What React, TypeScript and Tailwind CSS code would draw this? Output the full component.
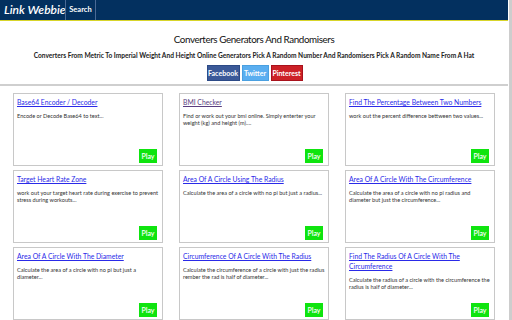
import React from "react";

const cards = [
  { t: "Base64 Encoder / Decoder", d: "Encode or Decode Base64 to text...", v: false },
  { t: "BMI Checker", d: "Find or work out your bmi online. Simply enterter your weight (kg) and height (m)....", v: true },
  { t: "Find The Percentage Between Two Numbers", d: "work out the percent difference bettween two values...", v: false },
  { t: "Target Heart Rate Zone", d: "work out your target heart rate during exercise to prevent stress during workouts...", v: false },
  { t: "Area Of A Circle Using The Radius", d: "Calculate the area of a circle with no pi but just a radius...", v: false },
  { t: "Area Of A Circle With The Circumference", d: "Calculate the area of a circle with no pi radius and diameter but just the circumference...", v: false },
  { t: "Area Of A Circle With The Diameter", d: "Calculate the area of a circle with no pi but just a diameter...", v: false },
  { t: "Circumference Of A Circle With The Radius", d: "Calculate the circumference of a circle with just the radius rember the rad is half of diameter...", v: false },
  { t: "Find The Radius Of A Circle With The Circumference", d: "Calculate the radius of a circle with the circumference the radius is half of diameter...", v: false },
];

export default function App() {
  return (
    <div className="flex h-[320px] w-[512px] overflow-hidden bg-white" style={{ fontFamily: 'Lato, "Open Sans", sans-serif' }}>
      <div className="flex w-[508px] flex-col">
        <div className="flex h-[24px] items-stretch bg-[#03305f]">
          <div className="flex w-[65px] items-center whitespace-nowrap pl-[4px] text-[12px] italic font-semibold text-white">Link Webbie</div>
          <div className="w-px bg-[#4a6a96]" />
          <div className="flex w-[29px] items-center justify-center whitespace-nowrap text-[7.5px] font-bold text-white">Search</div>
          <div className="w-px bg-[#4a6a96]" />
        </div>
        <div className="h-[2px] bg-[#d8d52a]" />
        <div className="mt-[11px] text-center text-[9.8px] tracking-[-0.4px] leading-[14px] text-[#111]">Converters Generators And Randomisers</div>
        <div className="mt-[5px] whitespace-nowrap text-center text-[6.6px] font-bold leading-[8px] text-[#222]">Converters From Metric To Imperial Weight And Height Online Generators Pick A Random Number And Randomisers Pick A Random Name From A Hat</div>
        <div className="mt-[6px] flex justify-center gap-[2px] pl-[1px]">
          <div className="flex h-[16px] w-[33px] items-center justify-center border border-[#2c4a86] bg-[#3b5998] text-[7px] font-bold text-white">Facebook</div>
          <div className="flex h-[16px] w-[27px] items-center justify-center border border-[#4aa0e0] bg-[#5aaef0] text-[7px] font-bold text-white">Twitter</div>
          <div className="flex h-[16px] w-[32px] items-center justify-center border border-[#a8121c] bg-[#cc2127] text-[7px] font-bold text-white">Pinterest</div>
        </div>
        <div className="mt-[3px] h-[2px] bg-[#cfcfcf]" />
        <div className="mt-[7px] grid grid-cols-[150px_150px_150px] gap-x-[16px] gap-y-[4px] pl-[13px]">
          {cards.map((c) => (
            <div key={c.t} className="flex h-[73px] flex-col border border-[#c8c8c8] pl-[3px] pr-[2px] pt-[3px]">
              <div className={`text-[6.8px] leading-[10px] underline ${c.v ? "text-[#5a3d7e]" : "text-[#2a2ae8]"}`}>{c.t}</div>
              <div className="mt-[5px] text-[5.6px] leading-[7px] text-[#333]">{c.d}</div>
              <div className="mt-auto mb-[2px] mr-[3px] flex h-[14px] w-[18px] items-center justify-center self-end bg-[#0fe40f] text-[7px] font-semibold text-white">Play</div>
            </div>
          ))}
        </div>
      </div>
      <div className="w-[4px] border-l border-white bg-[#cdcdcd]" />
    </div>
  );
}
